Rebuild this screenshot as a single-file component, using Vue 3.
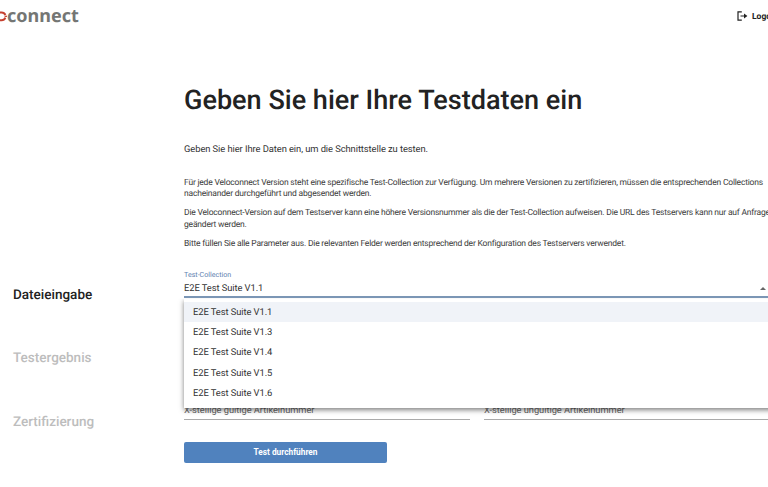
<script setup>
import { ref } from 'vue'

const steps = ['Dateieingabe', 'Testergebnis', 'Zertifizierung']
const suites = ['V1.1', 'V1.3', 'V1.4', 'V1.5', 'V1.6'].map((v) => `E2E Test Suite ${v}`)
const activeStep = ref(0)
const selected = ref(0)
</script>

<template>
  <div class="page">
    <header class="header">
      <div class="logo">
        <svg class="chain" width="7" height="14" viewBox="0 0 7 14" fill="none" stroke="#c5402f" stroke-width="2">
          <path d="M-1 3.5H1.6C4 3.5 4.8 4.6 5.4 6M-1 11.2H1.6C4 11.2 4.8 10 5.4 8.6" />
          <path d="M4.6 7.3H8" stroke-width="1.3" />
        </svg>
        <span class="wordmark">connect</span>
      </div>
      <a class="logout">
        <svg width="11" height="10" viewBox="0 0 11 10" fill="none" stroke="#222" stroke-width="1.2">
          <path d="M4.8 .8H1V9.2H4.8M3.5 5H8.5" />
          <path d="M7 2.4L10.4 5L7 7.6Z" fill="#222" stroke="none" />
        </svg>
        <span>Logout</span>
      </a>
    </header>

    <div class="body">
      <nav class="steps">
        <div v-for="(s, i) in steps" :key="s" class="step" :class="{ active: i === activeStep }">{{ s }}</div>
      </nav>

      <main class="content">
        <h1>Geben Sie hier Ihre Testdaten ein</h1>
        <p class="lead">Geben Sie hier Ihre Daten ein, um die Schnittstelle zu testen.</p>
        <div class="info">
          <p>Für jede Veloconnect Version steht eine spezifische Test-Collection zur Verfügung. Um mehrere Versionen zu zertifizieren, müssen die entsprechenden Collections<br />nacheinander durchgeführt und abgesendet werden.</p>
          <p>Die Veloconnect-Version auf dem Testserver kann eine höhere Versionsnummer als die der Test-Collection aufweisen. Die URL des Testservers kann nur auf Anfrage<br />geändert werden.</p>
          <p>Bitte füllen Sie alle Parameter aus. Die relevanten Felder werden entsprechend der Konfiguration des Testservers verwendet.</p>
        </div>

        <div class="select">
          <label>Test-Collection</label>
          <div class="value">
            <span>{{ suites[selected] }}</span>
            <i class="caret"></i>
          </div>
          <ul class="menu">
            <li v-for="(s, i) in suites" :key="s" :class="{ selected: i === selected }">{{ s }}</li>
          </ul>
        </div>

        <div class="fields">
          <div class="field">X-stellige gültige Artikelnummer</div>
          <div class="field">X-stellige ungültige Artikelnummer</div>
        </div>
        <button class="submit">Test durchführen</button>
      </main>
    </div>
  </div>
</template>

<style>
body { background: #fff; overflow: hidden; }
</style>

<style scoped>
.page { width: 768px; height: 487px; overflow: hidden; font-family: Roboto, sans-serif; color: #222; white-space: nowrap; text-rendering: geometricPrecision; }
.header { height: 32px; display: flex; justify-content: space-between; align-items: center; }
.logo { display: flex; align-items: center; height: 32px; }
.chain { flex: none; }
.wordmark { font: 700 18px/30px "Noto Sans", sans-serif; color: #747674; }
.logout { display: flex; align-items: center; gap: 4px; width: 31px; font-size: 8.5px; font-weight: 700; }
.logout svg { flex: none; }
.logout span { padding-top: 1px; }
.body { display: flex; }
.steps { width: 184px; flex: none; padding: 232px 0 0 13px; box-sizing: border-box; }
.step { height: 63.3px; line-height: 63.3px; font-size: 13.5px; font-weight: 500; color: #bdbdbd; }
.step.active { color: #222; }
.content { width: 600px; flex: none; padding-top: 48px; }
h1 { margin: 0; font-size: 27.05px; line-height: 40px; font-weight: 500; }
.lead { margin: 20px 0 0; font-size: 9.4px; letter-spacing: -0.08px; line-height: 20px; color: #333; }
.info { padding-top: 18px; font-size: 8.5px; letter-spacing: -0.2px; line-height: 11.3px; color: #3c3c3c; }
.info p { margin: 0 0 7.7px; }
.select { position: relative; margin-top: 20px; height: 29px; }
.select label { display: block; font-size: 7.1px; line-height: 10px; color: #5f82b0; }
.value { display: flex; justify-content: space-between; align-items: center; height: 16px; font-size: 9.4px; letter-spacing: -0.08px; color: #333; border-bottom: 2px solid #7b96b5; }
.value span { padding-top: 2px; }
.caret { margin: 1px 18px 0 0; border: 3px solid transparent; border-top: 0; border-bottom: 3px solid #666; }
.menu { position: absolute; z-index: 2; top: 29px; left: 0; width: 620px; height: 109px; box-sizing: border-box; margin: 0; padding: 3px 0; list-style: none; background: #fff; box-shadow: 0 2px 5px rgba(0, 0, 0, .5); clip-path: inset(0 -10px -12px -10px); font-size: 9.4px; letter-spacing: -0.08px; color: #333; }
.menu li { height: 20.25px; line-height: 22px; padding-left: 9px; }
.menu li.selected { background: #f0f3f8; }
.fields { display: flex; gap: 14px; margin-top: 104px; }
.field { width: 286px; height: 16px; line-height: 16px; flex: none; font-size: 9.3px; letter-spacing: -0.04px; color: #666; border-bottom: 1px solid #aaa; }
.submit { display: block; width: 203px; height: 21px; margin-top: 22px; padding: 0; border: 0; border-radius: 2px; background: #5082be; color: #fff; font: 700 8.3px/19px Roboto, sans-serif; }
</style>
